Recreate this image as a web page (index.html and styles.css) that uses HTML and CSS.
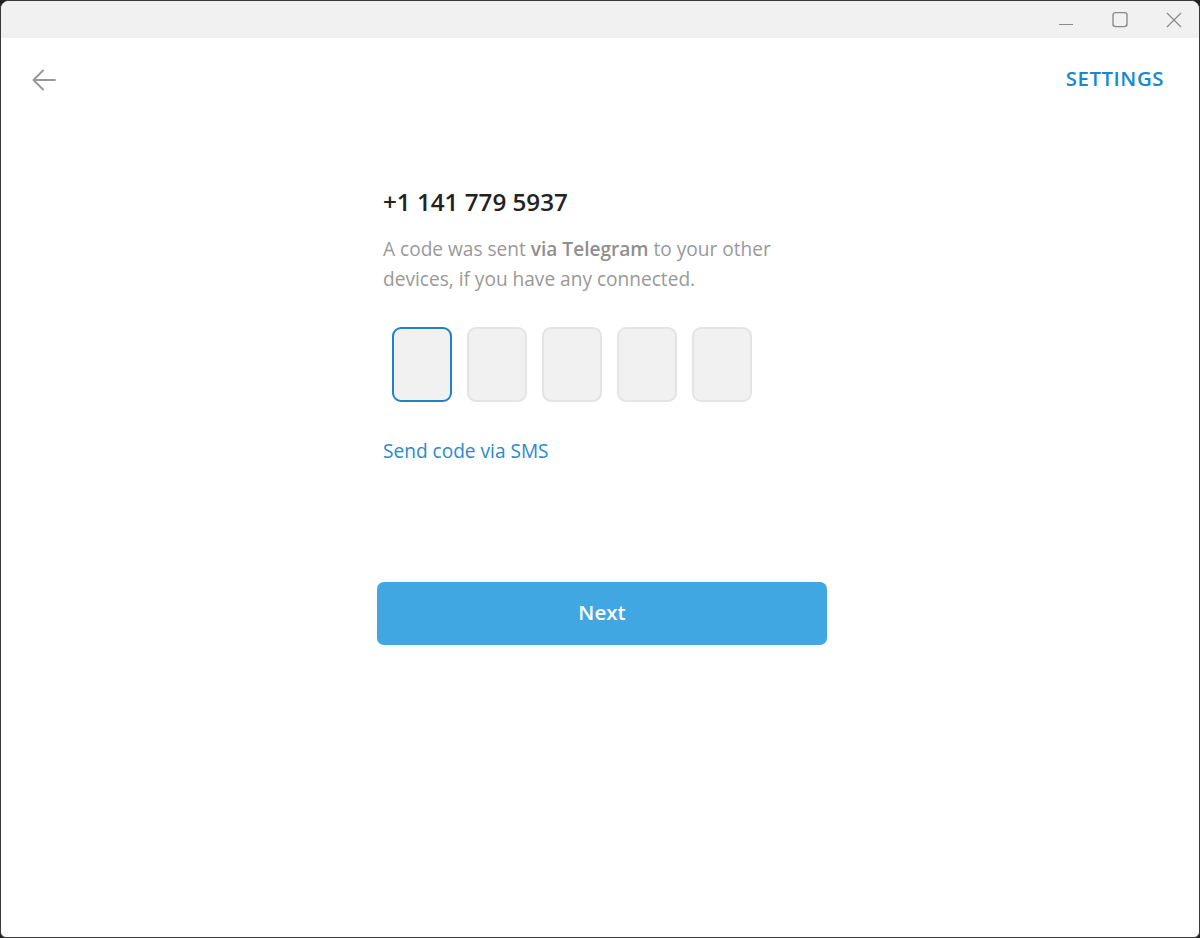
FILE: index.html
```html
<!DOCTYPE html>
<html>
<head>
<meta charset="utf-8">
<link rel="stylesheet" href="styles.css">
</head>
<body>
<div class="window">
  <div class="titlebar">
    <div class="winbtn">
      <svg width="16" height="16" viewBox="0 0 16 16"><path d="M1 12.5H15" stroke="#8a8a8a" stroke-width="1.2" fill="none"/></svg>
    </div>
    <div class="winbtn">
      <svg width="18" height="18" viewBox="0 0 18 18"><rect x="2" y="1.6" width="14" height="14" rx="2.5" stroke="#8a8a8a" stroke-width="1.4" fill="none"/></svg>
    </div>
    <div class="winbtn">
      <svg width="16" height="16" viewBox="0 0 16 16"><path d="M1 1L15 15M15 1L1 15" stroke="#8a8a8a" stroke-width="1.2" fill="none"/></svg>
    </div>
  </div>
  <div class="content">
    <div class="topbar">
      <div class="back">
        <svg width="26" height="26" viewBox="0 0 26 26"><path d="M24 13H3M12 3.5L2.5 13L12 22.5" stroke="#999" stroke-width="2" fill="none" stroke-linecap="round" stroke-linejoin="round"/></svg>
      </div>
      <div class="settings">SETTINGS</div>
    </div>
    <div class="column">
      <div class="inner">
        <div class="phone">+1 141 779 5937</div>
        <div class="desc">A code was sent <b>via Telegram</b> to your other devices, if you have any connected.</div>
        <div class="codes">
          <div class="box active"></div>
          <div class="box"></div>
          <div class="box"></div>
          <div class="box"></div>
          <div class="box"></div>
        </div>
        <div class="sms">Send code via SMS</div>
      </div>
      <div class="next">Next</div>
    </div>
  </div>
</div>
</body>
</html>
```
FILE: styles.css
```css
html, body {
  margin: 0;
  padding: 0;
  background: #202020;
  height: 100%;
}
body {
  font-family: "Open Sans", "Noto Sans", sans-serif;
}
.window {
  box-sizing: border-box;
  width: 1200px;
  height: 938px;
  background: #ffffff;
  border: 1px solid #3a3a3a;
  border-radius: 9px 9px 6px 6px;
  overflow: hidden;
  display: flex;
  flex-direction: column;
}
.titlebar {
  height: 37px;
  background: #f1f1f1;
  display: flex;
  justify-content: flex-end;
  align-items: center;
  gap: 6px;
  padding-right: 1px;
}
.winbtn {
  width: 48px;
  height: 37px;
  display: flex;
  align-items: center;
  justify-content: center;
}
.content {
  flex: 1;
  display: flex;
  flex-direction: column;
}
.topbar {
  height: 82px;
  display: flex;
  justify-content: space-between;
  align-items: center;
  padding: 0 35px 0 30px;
}
.back {
  width: 26px;
  height: 26px;
  margin-top: 2px;
}
.back svg { display: block; }
.settings {
  color: #168acd;
  font-weight: 600;
  font-size: 20.4px;
  letter-spacing: 0.55px;
  margin-top: -2px;
}
.column {
  width: 450px;
  margin: 0 auto;
  position: relative;
  left: 2px;
  padding-top: 67px;
}
.inner {
  padding-left: 6px;
}
.phone {
  font-size: 24.2px;
  font-weight: 600;
  color: #222;
  line-height: 30px;
}
.desc {
  margin-top: 17px;
  font-size: 19.1px;
  line-height: 30px;
  color: #999;
  width: 420px;
}
.desc b {
  font-weight: 600;
  color: #8f8f8f;
}
.codes {
  display: flex;
  gap: 15px;
  margin-top: 33px;
  margin-left: 9px;
}
.box {
  box-sizing: border-box;
  width: 60px;
  height: 75px;
  border-radius: 9px;
  background: #f1f1f1;
  border: 2px solid #e4e4e4;
}
.box.active {
  border: 2.5px solid #1f82c6;
}
.sms {
  margin-top: 35px;
  color: #2b8ac9;
  font-size: 19.1px;
  line-height: 28px;
}
.next {
  margin-top: 117px;
  height: 63px;
  box-sizing: border-box;
  padding-bottom: 3px;
  border-radius: 7px;
  background: #40a7e3;
  color: #fff;
  font-size: 20.5px;
  font-weight: 600;
  display: flex;
  align-items: center;
  justify-content: center;
}
```
